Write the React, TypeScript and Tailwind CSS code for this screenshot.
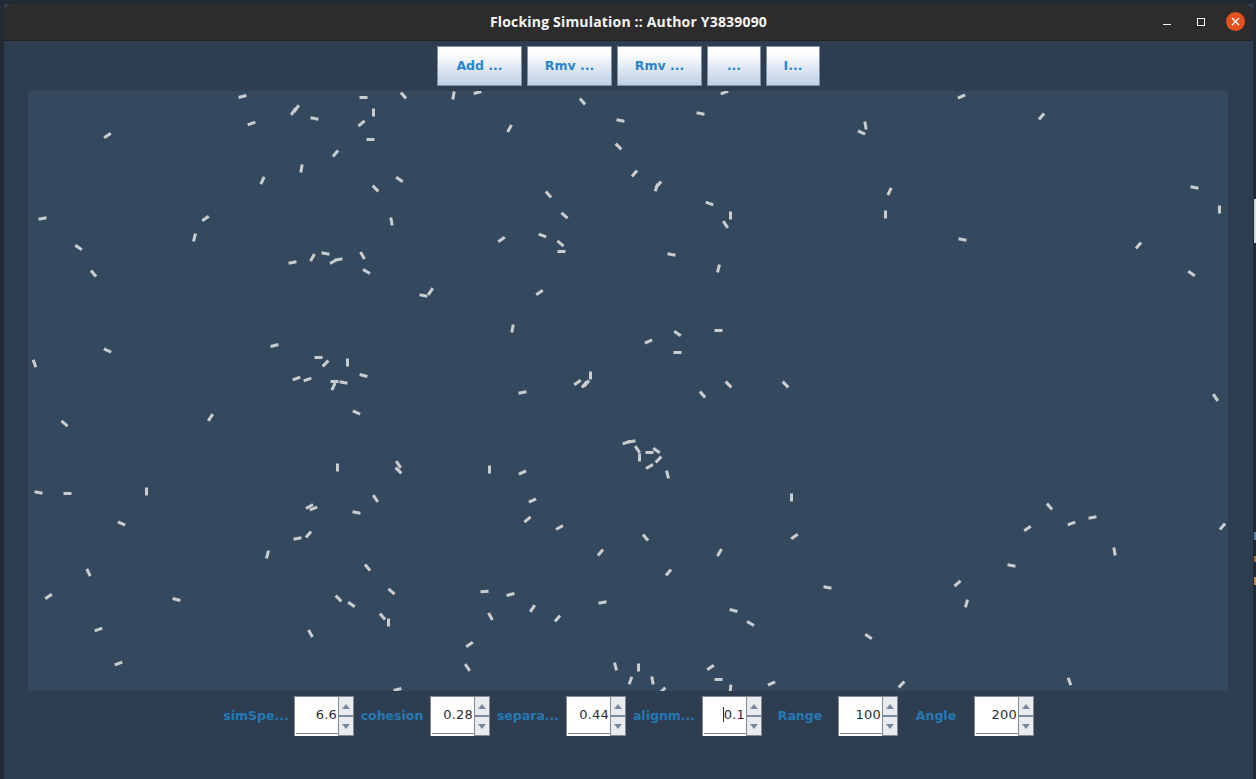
const boids: [number, number, number][] = [
[242,96,-15],[296,108,-55],[293,111,-55],[251,123,-20],[314,118,10],[363,97,0],[373,112,90],[361,123,-40],[370,139,0],[403,95,50],[453,95,-80],[477,92,-15],[509,128,-60],[582,101,50],[620,120,10],[618,146,45],[700,113,10],[724,92,-20],[865,125,80],[861,132,25],[961,96,-25],[1041,116,-50],[107,135,-35],[335,153,-50],[301,168,-80],[262,180,-65],[375,188,45],[399,179,35],[634,173,-50],[658,184,-50],[656,187,-70],[548,194,50],[564,215,40],[709,203,20],[730,215,90],[725,224,55],[889,191,-65],[885,214,90],[1194,187,10],[1219,209,90],[42,218,-10],[205,218,-35],[391,221,80],[194,237,-75],[78,247,35],[93,273,50],[292,262,-10],[312,257,-60],[325,253,10],[338,259,-10],[333,261,-30],[362,255,60],[366,271,30],[501,239,-35],[542,235,20],[560,243,40],[561,251,0],[671,254,10],[718,268,-75],[962,239,10],[1138,245,-50],[1191,273,35],[423,295,10],[430,291,-55],[539,292,-35],[512,328,-80],[648,341,-25],[677,333,35],[677,352,0],[718,330,0],[107,350,25],[34,363,70],[274,345,-15],[318,357,0],[325,363,-45],[347,362,90],[363,375,15],[296,378,-20],[307,379,-20],[334,381,0],[333,386,-65],[343,382,10],[356,412,25],[210,417,-55],[64,423,40],[522,392,-10],[577,382,-35],[584,384,-50],[586,383,-50],[590,375,90],[702,394,50],[728,384,45],[785,384,45],[1215,397,55],[626,442,-20],[631,441,-10],[637,449,55],[649,452,0],[656,450,35],[658,459,-45],[639,457,90],[649,466,-30],[667,474,75],[337,467,90],[398,464,55],[398,470,45],[489,469,90],[522,472,-25],[38,492,10],[67,493,0],[146,491,90],[309,506,-30],[313,508,-20],[375,498,55],[356,512,10],[532,500,-25],[527,519,-40],[559,527,-30],[121,523,25],[791,497,90],[645,537,50],[794,536,-35],[1049,506,50],[1027,528,-35],[1071,523,-20],[1092,517,-10],[1222,526,-50],[297,538,-10],[308,534,-50],[267,554,-75],[600,552,-50],[719,552,-60],[1114,551,80],[367,567,50],[88,572,65],[668,572,-50],[1011,565,10],[48,596,-35],[176,599,15],[338,598,45],[351,604,35],[391,591,40],[484,591,-5],[510,594,-15],[532,608,-55],[602,602,-10],[827,587,10],[957,583,-40],[966,603,-75],[733,610,15],[750,623,30],[98,629,-20],[382,616,50],[388,622,90],[490,616,60],[557,618,-50],[310,633,60],[868,636,35],[469,644,-35],[118,663,-20],[467,667,55],[615,666,75],[638,667,90],[710,667,-35],[630,680,-70],[652,680,80],[718,679,0],[771,683,-25],[730,688,-85],[397,689,-15],[662,690,-45],[901,684,-45],[1069,681,70],
];

const buttons: [string, string][] = [
  ["Add ...", "w-[85px]"],
  ["Rmv ...", "w-[85px]"],
  ["Rmv ...", "w-[85px]"],
  ["...", "w-[54px]"],
  ["I...", "w-[54px]"],
];

const spinners: [string, string, boolean?][] = [
  ["simSpe...", "6.6"],
  ["cohesion", "0.28"],
  ["separa...", "0.44"],
  ["alignm...", "0.1", true],
  ["Range", "100"],
  ["Angle", "200"],
];

function Arrow({ up }: { up?: boolean }) {
  return (
    <svg width="8" height="5" viewBox="0 0 8 5" className="block">
      <path d={up ? "M4 0 L8 5 L0 5 Z" : "M4 5 L8 0 L0 0 Z"} fill="#7a8899" />
    </svg>
  );
}

function Spinner({ label, value, caret }: { label: string; value: string; caret?: boolean }) {
  return (
    <>
      <div className="w-[66px] text-center text-[12.5px] font-bold text-[#2478b4] whitespace-nowrap pt-[1px]">{label}</div>
      <div className="w-[60px] h-[40px] flex bg-white">
        <div className="w-[44px] h-full border-l border-t border-[#7f8c9c] flex flex-col">
          <div className="flex-1 flex items-center justify-end pr-[1px] pb-[1px] text-[13px] text-[#27303c] tracking-[0.2px]">
            {caret && <span className="w-[1px] h-[15px] bg-[#27303c]" />}
            {value}
          </div>
          <div className="h-[1px] ml-[1px] mb-[2px] bg-[#7f8c9c]" />
        </div>
        <div className="w-[16px] h-full border border-[#7f8c9c] bg-[#e9ebee] flex flex-col">
          <div className="flex-1 flex items-center justify-center"><Arrow up /></div>
          <div className="h-[2px] bg-[#7f8c9c]" />
          <div className="flex-1 flex items-center justify-center"><Arrow /></div>
        </div>
      </div>
    </>
  );
}

export default function App() {
  return (
    <div className="relative w-[1256px] h-[779px] overflow-hidden bg-[#222a34] pt-[4px] pl-[4px] pr-[3px] font-['DejaVu_Sans',sans-serif]">
      <div className="w-[1249px] h-[775px] flex flex-col bg-[#2e3e50]">
        <div className="relative h-[37px] shrink-0 rounded-t-[9px] bg-[#2c2c2c] border-b border-[#232323] flex items-center justify-center">
          <span className="text-[14px] font-bold text-[#f4f4f4] font-['Open_Sans',sans-serif] tracking-[0.18px] pb-[1px]">Flocking Simulation :: Author Y3839090</span>
          <div className="absolute right-[8px] top-[8px] flex items-start">
            <div className="w-[8px] h-[1px] bg-white mr-[26px] mt-[12px]" />
            <div className="w-[8px] h-[8px] border border-white mr-[21px] mt-[6px]" />
            <div className="w-[19px] h-[19px] rounded-full bg-[#e4511e] flex items-center justify-center">
              <svg width="9" height="9" viewBox="0 0 9 9"><path d="M1 1 L8 8 M8 1 L1 8" stroke="#fff" strokeWidth="1.4" /></svg>
            </div>
          </div>
        </div>
        <div className="flex justify-center gap-[5px] pt-[5px] h-[50px] shrink-0">
          {buttons.map(([t, w], i) => (
            <div key={i} className={`${w} h-[40px] pt-[1px] border border-[#7f90a4] bg-gradient-to-b from-white from-[15%] to-[#bdd0e5] flex items-center justify-center text-[12.5px] font-bold text-[#2a86cb]`}>{t}</div>
          ))}
        </div>
        <div className="ml-[24px] w-[1200px] h-[600px] shrink-0 bg-[#35495e]">
          <svg width="1200" height="600" viewBox="28 91 1200 600" className="block">
            {boids.map(([x, y, a], i) => {
              const r = (a * Math.PI) / 180;
              const dx = Math.cos(r) * 4;
              const dy = Math.sin(r) * 4;
              return <line key={i} x1={x + 0.5 - dx} y1={y + 0.5 - dy} x2={x + 0.5 + dx} y2={y + 0.5 + dy} stroke="#c9cdd0" strokeWidth="3" />;
            })}
          </svg>
        </div>
        <div className="flex justify-center items-center gap-[5px] pt-[5px] h-[45px] shrink-0">
          {spinners.map(([l, v, c]) => (
            <Spinner key={l} label={l} value={v} caret={c} />
          ))}
        </div>
      </div>
      <div className="absolute right-0 top-[199px] w-[2px] h-[44px] bg-[#d8d8d8]" />
      <div className="absolute right-0 top-[532px] w-[2px] h-[8px] bg-[#5e7f9c]" />
      <div className="absolute right-0 top-[556px] w-[2px] h-[6px] bg-[#a8703a]" />
      <div className="absolute right-0 top-[577px] w-[2px] h-[8px] bg-[#c08a4a]" />
    </div>
  );
}
